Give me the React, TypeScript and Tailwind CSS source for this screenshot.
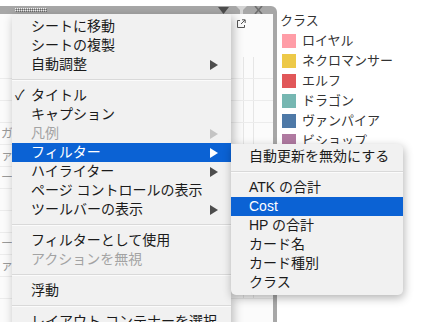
import React from 'react';

type Item = {
  label?: string;
  sep?: boolean;
  check?: boolean;
  disabled?: boolean;
  sub?: boolean;
  active?: boolean;
};

const mainItems: Item[] = [
  { label: 'シートに移動' },
  { label: 'シートの複製' },
  { label: '自動調整', sub: true },
  { sep: true },
  { label: 'タイトル', check: true },
  { label: 'キャプション' },
  { label: '凡例', disabled: true, sub: true },
  { label: 'フィルター', sub: true, active: true },
  { label: 'ハイライター', sub: true },
  { label: 'ページ コントロールの表示' },
  { label: 'ツールバーの表示', sub: true },
  { sep: true },
  { label: 'フィルターとして使用' },
  { label: 'アクションを無視', disabled: true },
  { sep: true },
  { label: '浮動' },
  { sep: true },
  { label: 'レイアウト コンテナーを選択' },
];

const subItems: Item[] = [
  { label: '自動更新を無効にする' },
  { sep: true },
  { label: 'ATK の合計' },
  { label: 'Cost', active: true },
  { label: 'HP の合計' },
  { label: 'カード名' },
  { label: 'カード種別' },
  { label: 'クラス' },
];

const legend = [
  { name: 'ロイヤル', color: 'bg-[#ff9da7]' },
  { name: 'ネクロマンサー', color: 'bg-[#edc948]' },
  { name: 'エルフ', color: 'bg-[#e15759]' },
  { name: 'ドラゴン', color: 'bg-[#76b7b2]' },
  { name: 'ヴァンパイア', color: 'bg-[#4e79a7]' },
  { name: 'ビショップ', color: 'bg-[#b07aa1]' },
];

const Arrow = ({ color }: { color: string }) => (
  <svg width="8" height="10" viewBox="0 0 8 10">
    <path d="M0 0 L8 5 L0 10 Z" fill={color} />
  </svg>
);

const Separator = () => (
  <div className="h-[12px] flex flex-col justify-center">
    <div className="h-px bg-[#d9d9d9]" />
    <div className="h-px bg-[#fbfbfb]" />
  </div>
);

const MenuRow = ({ item, padLeft }: { item: Item; padLeft: string }) => {
  if (item.sep) return <Separator />;
  const text = item.active ? 'text-white' : item.disabled ? 'text-[#a3a3a3]' : 'text-[#1b1b1b]';
  return (
    <div
      className={`relative h-[19px] flex items-center justify-between pr-[13px] ${padLeft} ${
        item.active ? 'bg-[#0b62d4]' : ''
      } ${text}`}
    >
      {item.check && <span className="absolute left-[3px] top-0 leading-[19px] text-[14px]">✓</span>}
      <span className="whitespace-nowrap leading-[19px]">{item.label}</span>
      {item.sub && <Arrow color={item.active ? '#ffffff' : item.disabled ? '#c4c4c4' : '#4d4d4d'} />}
    </div>
  );
};

const Grip = () => (
  <svg width="32" height="5" viewBox="0 0 32 5">
    {Array.from({ length: 16 }).map((_, i) => (
      <g key={i}>
        <rect x={i * 2} y={0} width="1" height="1" fill="#f2f2f2" />
        <rect x={i * 2} y={2} width="1" height="1" fill="#f2f2f2" />
        <rect x={i * 2 + 1} y={1} width="1" height="1" fill="#6a6a6a" />
        <rect x={i * 2 + 1} y={3} width="1" height="1" fill="#6a6a6a" />
      </g>
    ))}
  </svg>
);

export default function App() {
  return (
    <div className="relative w-[436px] h-[322px] overflow-hidden bg-white font-['Liberation_Sans','Noto_Sans_CJK_JP',sans-serif] text-[14px]">
      {/* dashboard behind the menus */}
      <div className="flex h-full">
        <div className="w-[277px] flex flex-col">
          <div className="h-[6px] bg-white" />
          <div className="h-[8px] bg-[#a7a7a7] rounded-tr-[6px] flex items-center">
            <div className="ml-[15px]">
              <Grip />
            </div>
            <div className="ml-auto mr-[14px] flex items-center gap-[7px]">
              <svg width="11" height="7" viewBox="0 0 11 7">
                <path d="M0 0 H11 L5.5 7 Z" fill="#4d4d4d" />
              </svg>
              <svg width="11" height="8" viewBox="0 0 11 8">
                <path d="M0 0 H11 L7 4 V8 H4 V4 Z" fill="#d4d4d4" />
              </svg>
              <svg width="9" height="8" viewBox="0 0 9 8">
                <path d="M1 0 L8 8 M8 0 L1 8" stroke="#6e6e6e" strokeWidth="1.6" />
              </svg>
            </div>
          </div>
          <div className="flex-1 flex flex-col border-r-[4px] border-[#a7a7a7] bg-[#fbfbfb]">
            <div className="h-[43px] pl-[236px] pt-[5px]">
              <svg width="10" height="10" viewBox="0 0 10 10" fill="none" stroke="#555" strokeWidth="1">
                <path d="M4 1.5 H1.5 V8.5 H8.5 V6" />
                <path d="M5 5 L9 1 M6 0.8 H9.2 V4" />
              </svg>
            </div>
            {[0, 1, 2, 3, 4, 5, 6, 7, 8, 9, 10].map((r) => (
              <div key={r} className="h-[22px] flex border-b border-[#ececec] text-[12px] text-[#9a9a9a]">
                <div className="w-[12px] overflow-hidden whitespace-nowrap leading-[22px] pl-[1px]">
                  {['', '', '', 'ガ', 'ァ', 'ー', '', '', 'ー', 'ァ', ''][r]}
                </div>
                <div className="w-[231px]" />
                <div className="w-[10px] border-l border-[#e6e6e6]" />
                <div className="flex-1 border-l border-[#e6e6e6]" />
              </div>
            ))}
          </div>
        </div>
        <div className="flex-1 pl-[3px] pt-[10px] text-[13px] text-[#333]">
          <div className="h-[21px] leading-[21px]">クラス</div>
          {legend.map((l) => (
            <div key={l.name} className="h-[20px] flex items-center">
              <div className={`ml-[2px] w-[14px] h-[14px] ${l.color}`} />
              <span className="ml-[6px] whitespace-nowrap">{l.name}</span>
            </div>
          ))}
        </div>
      </div>

      {/* context menu */}
      <div className="absolute left-[12px] top-[14px] w-[219px] pt-[3px] pb-[4px] bg-[#f1f1f1] shadow-[2px_3px_10px_rgba(0,0,0,0.28)]">
        {mainItems.map((it, i) => (
          <MenuRow key={i} item={it} padLeft="pl-[19px]" />
        ))}
      </div>

      {/* submenu */}
      <div className="absolute left-[231px] top-[144px] w-[172px] py-[3px] bg-[#f1f1f1] rounded-[5px] rounded-tl-none shadow-[1px_3px_10px_rgba(0,0,0,0.3)]">
        {subItems.map((it, i) => (
          <MenuRow key={i} item={it} padLeft="pl-[18px]" />
        ))}
      </div>
    </div>
  );
}
